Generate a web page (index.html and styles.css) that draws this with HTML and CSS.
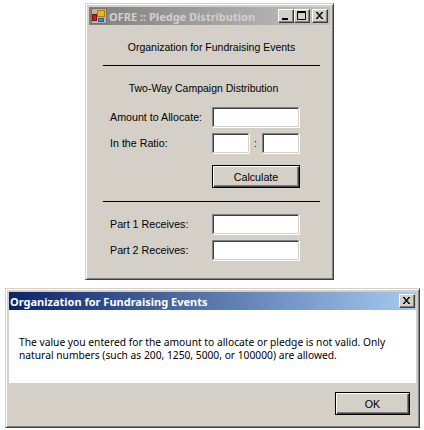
FILE: index.html
```html
<!DOCTYPE html>
<html lang="en">
<head>
    <meta charset="UTF-8">
    <meta name="viewport" content="width=device-width, initial-scale=1.0">
    <title>OFRE :: Pledge Distribution</title>
    <link rel="stylesheet" href="styles.css">
</head>
<body>
    <div class="window form-window">
        <div class="titlebar inactive">
            <svg class="app-icon" width="16" height="16" viewBox="0 0 16 16">
                <rect x="0.5" y="0.5" width="15" height="15" fill="#b8b4ac" stroke="#77746e"/>
                <rect x="1.5" y="6.5" width="4" height="6" fill="#c02020" stroke="#801010"/>
                <rect x="6.5" y="2.5" width="7" height="6" fill="#f2b414" stroke="#a87c10"/>
                <rect x="7.5" y="10.5" width="5" height="3" fill="#4a86dc" stroke="#2a56a0"/>
            </svg>
            <span class="title-text">OFRE :: Pledge Distribution</span>
            <div class="caption-buttons">
                <button class="caption-btn"><svg width="10" height="10" viewBox="0 0 10 10"><rect x="1" y="7" width="6" height="2" fill="#000"/></svg></button>
                <button class="caption-btn"><svg width="10" height="10" viewBox="0 0 10 10"><path d="M0.5 0.5h8v8h-8z M0 1.5h9" fill="none" stroke="#000"/></svg></button>
                <button class="caption-btn close-btn"><svg width="10" height="10" viewBox="0 0 10 10"><path d="M1 1l6 7M2 1l6 7M7 1l-6 7M8 1l-6 7" fill="none" stroke="#000"/></svg></button>
            </div>
        </div>
        <div class="form-body">
            <p class="heading">Organization for Fundraising Events</p>
            <hr class="divider">
            <p class="heading campaign">Two-Way Campaign Distribution</p>
            <div class="row first-row">
                <label>Amount to Allocate:</label>
                <div class="field wide"></div>
            </div>
            <div class="row">
                <label>In the Ratio:</label>
                <div class="field small"></div>
                <span class="colon">:</span>
                <div class="field small"></div>
            </div>
            <div class="row calc-row">
                <label></label>
                <button class="win-btn calc-btn">Calculate</button>
            </div>
            <hr class="divider lower">
            <div class="row part-row">
                <label>Part 1 Receives:</label>
                <div class="field wide"></div>
            </div>
            <div class="row">
                <label>Part 2 Receives:</label>
                <div class="field wide"></div>
            </div>
        </div>
    </div>

    <div class="window dialog">
        <div class="titlebar active">
            <span class="title-text">Organization for Fundraising Events</span>
            <div class="caption-buttons">
                <button class="caption-btn close-btn"><svg width="10" height="10" viewBox="0 0 10 10"><path d="M1 1l6 7M2 1l6 7M7 1l-6 7M8 1l-6 7" fill="none" stroke="#000"/></svg></button>
            </div>
        </div>
        <div class="message">
            <p>The value you entered for the amount to allocate or pledge is not valid. Only<br>natural numbers (such as 200, 1250, 5000, or 100000) are allowed.</p>
        </div>
        <div class="dialog-footer">
            <button class="win-btn ok-btn">OK</button>
        </div>
    </div>
</body>
</html>
```

FILE: styles.css
```css
body {
    margin: 0;
    background: #fff;
    font-family: "Liberation Sans", Arial, sans-serif;
    font-size: 10.7px;
    color: #000;
}

p {
    margin: 0;
}

.window {
    box-sizing: border-box;
    background: #d4d0c8;
    border: 1px solid;
    border-color: #d4d0c8 #404040 #404040 #d4d0c8;
    box-shadow: inset 1px 1px 0 #fff, inset -1px -1px 0 #808080;
    padding: 3px;
}

.form-window {
    width: 249px;
    height: 277px;
    margin: 3px 0 0 85px;
}

.dialog {
    width: 415px;
    height: 140px;
    margin: 8px 0 0 5px;
}

.titlebar {
    display: flex;
    align-items: center;
    height: 18px;
    font-family: "Noto Sans", Tahoma, sans-serif;
    font-size: 11px;
    font-weight: bold;
}

.titlebar.inactive {
    background: linear-gradient(to right, #808080, #c0c0c0);
    color: #d4d0c8;
    padding-left: 2px;
}

.titlebar.active {
    background: linear-gradient(to right, #0a246a, #a6caf0);
    color: #fff;
    padding-left: 1px;
}

.titlebar.active .caption-buttons {
    margin-right: 1px;
}

.app-icon {
    flex: none;
    margin-right: 2px;
}

.title-text {
    flex: 1;
    white-space: nowrap;
}

.caption-buttons {
    display: flex;
    margin-right: 2px;
}

.caption-btn {
    box-sizing: border-box;
    width: 16px;
    height: 14px;
    padding: 0;
    display: flex;
    align-items: center;
    justify-content: center;
    background: #d4d0c8;
    border: 1px solid;
    border-color: #fff #404040 #404040 #fff;
    box-shadow: inset -1px -1px 0 #808080;
}

.close-btn {
    margin-left: 2px;
}

.form-body {
    padding: 15px 10px 0 14px;
}

.heading {
    text-align: center;
    height: 14px;
    line-height: 14px;
    font-size: 10.5px;
}

.divider {
    height: 1px;
    margin: 11px 0 0 0;
    border: 0;
    background: #000;
}

.campaign {
    margin-top: 15px;
    padding-right: 16px;
}

.row {
    display: flex;
    align-items: center;
    height: 20px;
    margin-top: 6px;
    margin-left: 7px;
}

.first-row {
    margin-top: 12px;
}

.row label {
    flex: none;
    width: 102px;
}

.field {
    box-sizing: border-box;
    height: 20px;
    background: #fff;
    border: 1px solid;
    border-color: #808080 #d4d0c8 #d4d0c8 #808080;
    box-shadow: inset 1px 1px 0 #404040, 1px 1px 0 #fff;
}

.field.wide {
    width: 87px;
}

.field.small {
    width: 37px;
}

.colon {
    width: 13px;
    text-align: center;
}

.calc-row {
    height: 23px;
    margin-top: 12px;
}

.win-btn {
    box-sizing: border-box;
    padding: 0;
    font: inherit;
    background: #d4d0c8;
    border: 1px solid #000;
    box-shadow: inset 1px 1px 0 #fff, inset -1px -1px 0 #404040, inset -2px -2px 0 #808080;
}

.calc-btn {
    width: 88px;
    height: 23px;
}

.lower {
    margin-top: 13px;
}

.part-row {
    margin-top: 12px;
}

.message {
    background: #fff;
    height: 73px;
    padding: 26px 0 0 10px;
    box-sizing: border-box;
    font-family: "Noto Sans", Tahoma, sans-serif;
    font-size: 10.25px;
    line-height: 13px;
}

.dialog-footer {
    display: flex;
    justify-content: flex-end;
    padding: 9px 6px 0 0;
}

.ok-btn {
    width: 75px;
    height: 23px;
}
```
